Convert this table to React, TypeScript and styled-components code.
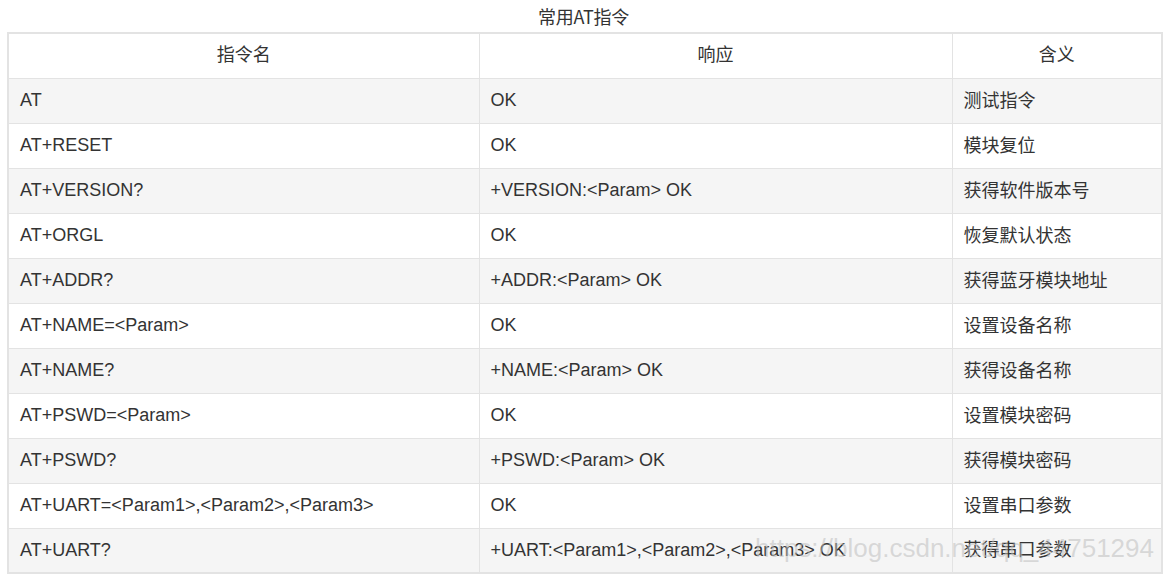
import styled, { createGlobalStyle } from "styled-components"

const GlobalStyle = createGlobalStyle`
  html, body {
    margin: 0;
    padding: 0;
    background: #fff;
  }
  body {
    font-family: "Liberation Sans", Arial, "Noto Sans CJK SC", sans-serif;
    color: #333;
  }
`

const cjk = `"Noto Sans CJK SC", "Liberation Sans", sans-serif`

const Page = styled.div`
  position: relative;
  padding: 5px 3px 0 7px;
`

const Caption = styled.div`
  text-align: center;
  font-size: 18px;
  line-height: 22px;
  margin-bottom: 5px;
  color: #333;
  font-family: ${cjk};
  letter-spacing: -0.3px;
`

const Table = styled.table`
  width: 1154px;
  border-collapse: collapse;
  table-layout: fixed;
  font-size: 18px;
  border: 2px solid #e3e3e3;
`

const Row = styled.tr<{ $shaded?: boolean }>`
  height: 45px;
  background: ${p => (p.$shaded ? "#f5f5f5" : "#fff")};
`

const HeadCell = styled.th`
  font-weight: normal;
  text-align: center;
  border: 1.5px solid #e3e3e3;
  padding: 0 10px 5px;
  color: #333;
  font-family: ${cjk};
`

const Cell = styled.td<{ $cjk?: boolean }>`
  border: 1.5px solid #e3e3e3;
  padding: 0 11px ${p => (p.$cjk ? "4px" : "0")};
  white-space: nowrap;
  color: #333;
  ${p => (p.$cjk ? `font-family: ${cjk};` : "")}
`

const Watermark = styled.div`
  position: absolute;
  right: 9px;
  bottom: 11px;
  font-size: 26px;
  line-height: 30px;
  color: rgba(190, 190, 190, 0.55);
  pointer-events: none;
  white-space: nowrap;
`

const rows: [string, string, string][] = [
  ["AT", "OK", "测试指令"],
  ["AT+RESET", "OK", "模块复位"],
  ["AT+VERSION?", "+VERSION:<Param> OK", "获得软件版本号"],
  ["AT+ORGL", "OK", "恢复默认状态"],
  ["AT+ADDR?", "+ADDR:<Param> OK", "获得蓝牙模块地址"],
  ["AT+NAME=<Param>", "OK", "设置设备名称"],
  ["AT+NAME?", "+NAME:<Param> OK", "获得设备名称"],
  ["AT+PSWD=<Param>", "OK", "设置模块密码"],
  ["AT+PSWD?", "+PSWD:<Param> OK", "获得模块密码"],
  ["AT+UART=<Param1>,<Param2>,<Param3>", "OK", "设置串口参数"],
  ["AT+UART?", "+UART:<Param1>,<Param2>,<Param3> OK", "获得串口参数"],
]

export default function App() {
  return (
    <Page>
      <GlobalStyle />
      <Caption>常用AT指令</Caption>
      <Table>
        <colgroup>
          <col style={{ width: 471 }} />
          <col style={{ width: 473 }} />
          <col style={{ width: 210 }} />
        </colgroup>
        <thead>
          <Row>
            <HeadCell>指令名</HeadCell>
            <HeadCell>响应</HeadCell>
            <HeadCell>含义</HeadCell>
          </Row>
        </thead>
        <tbody>
          {rows.map((r, i) => (
            <Row key={r[0]} $shaded={i % 2 === 0}>
              <Cell>{r[0]}</Cell>
              <Cell>{r[1]}</Cell>
              <Cell $cjk>{r[2]}</Cell>
            </Row>
          ))}
        </tbody>
      </Table>
      <Watermark>https://blog.csdn.net/qq_44751294</Watermark>
    </Page>
  )
}
